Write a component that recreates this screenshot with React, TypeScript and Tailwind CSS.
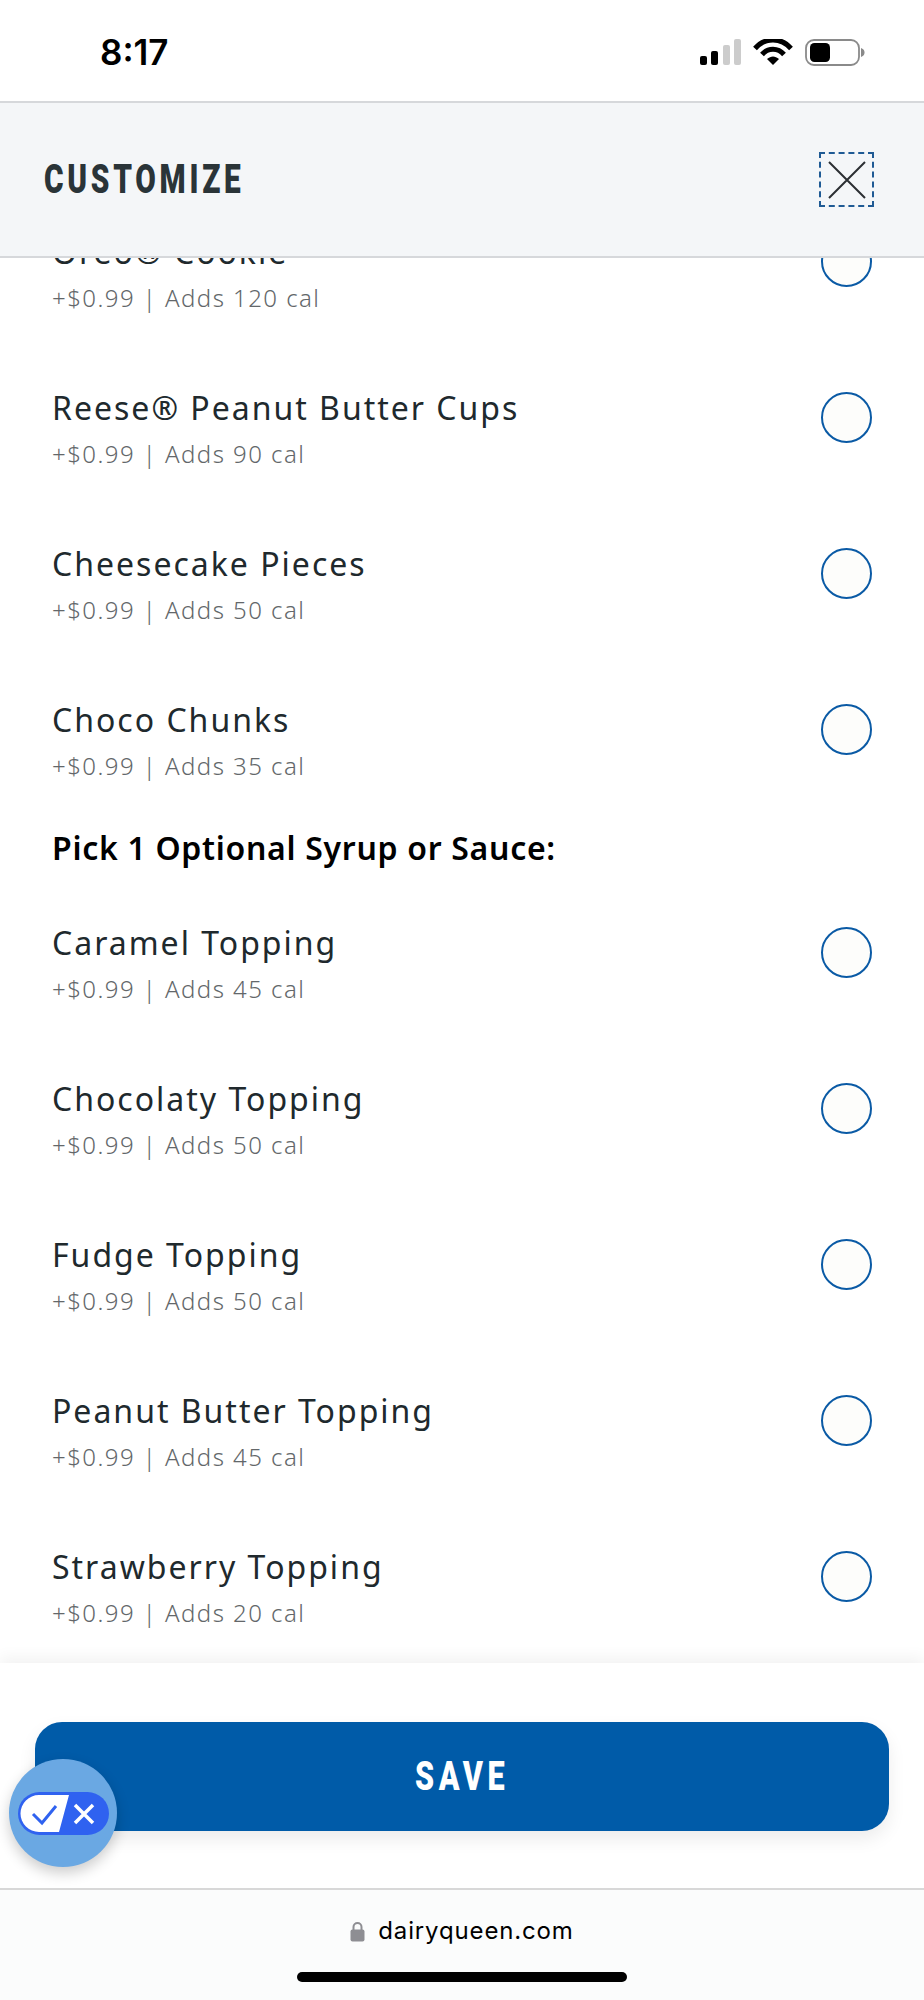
const topRows = [
  { name: 'Oreo® Cookie', info: '+$0.99 | Adds 120 cal' },
  { name: 'Reese® Peanut Butter Cups', info: '+$0.99 | Adds 90 cal' },
  { name: 'Cheesecake Pieces', info: '+$0.99 | Adds 50 cal' },
  { name: 'Choco Chunks', info: '+$0.99 | Adds 35 cal' },
];

const syrupRows = [
  { name: 'Caramel Topping', info: '+$0.99 | Adds 45 cal' },
  { name: 'Chocolaty Topping', info: '+$0.99 | Adds 50 cal' },
  { name: 'Fudge Topping', info: '+$0.99 | Adds 50 cal' },
  { name: 'Peanut Butter Topping', info: '+$0.99 | Adds 45 cal' },
  { name: 'Strawberry Topping', info: '+$0.99 | Adds 20 cal' },
];

function OptionRow({ name, info }: { name: string; info: string }) {
  return (
    <div className="flex items-start justify-between pl-[52px] pr-[52px] h-[78px]">
      <div className="flex flex-col">
        <span className="text-[32px] leading-[36px] tracking-[2px] text-[#20292d]">{name}</span>
        <span className="mt-[14px] text-[24px] leading-[28px] tracking-[1.45px] font-light text-[#63676a]">{info}</span>
      </div>
      <div className="mt-[2px] w-[51px] h-[51px] rounded-full border-2 border-[#0a5aa5] bg-[#fdfdfb]" />
    </div>
  );
}

function StatusIcons() {
  return (
    <svg width="170" height="32" viewBox="0 0 170 32" className="block">
      <rect x="1" y="17" width="7" height="9" rx="2" fill="#000" />
      <rect x="12" y="12" width="7" height="14" rx="2" fill="#000" />
      <rect x="24" y="6" width="7" height="20" rx="2" fill="#cccccc" />
      <rect x="35" y="0" width="7" height="26" rx="2" fill="#cccccc" />
      <path d="M56 9.5 C66 -2 82 -2 92 9.5" fill="none" stroke="#000" strokeWidth="5" />
      <path d="M63 15.5 C69 8.5 79 8.5 85 15.5" fill="none" stroke="#000" strokeWidth="5" />
      <path d="M68 20 C72 16.5 76 16.5 80 20 L74 26 Z" fill="#000" />
      <rect x="107" y="1" width="53" height="25" rx="8" fill="none" stroke="#8a8a8a" strokeWidth="1.8" />
      <rect x="111" y="4" width="20" height="19" rx="4.5" fill="#000" />
      <path d="M162 9 C165 10 165.5 12 165.5 13.5 C165.5 15 165 17 162 18 Z" fill="#8a8a8a" />
    </svg>
  );
}

function ConsentBadge() {
  return (
    <div className="absolute z-20 left-[9px] top-[1759px] w-[108px] h-[108px] rounded-full bg-[#6aa8e3] shadow-[0_6px_14px_rgba(0,0,0,0.2)] flex items-center justify-center">
      <svg width="91" height="43" viewBox="0 0 91 43" className="block">
        <rect x="0" y="0" width="91" height="43" rx="21.5" fill="#2f62f0" />
        <path d="M21 3 H51 L41 40 H21 A18.5 18.5 0 0 1 21 3 Z" fill="#fff" />
        <path d="M15 22 L24 31 L38 14" fill="none" stroke="#2f62f0" strokeWidth="3" />
        <path d="M57 13 L75 31 M75 13 L57 31" fill="none" stroke="#fff" strokeWidth="3.5" />
      </svg>
    </div>
  );
}

export default function App() {
  return (
    <div className="relative w-[924px] h-[2000px] overflow-hidden bg-white flex flex-col font-['Noto_Sans','Lato',sans-serif]">
      {/* status bar */}
      <div className="h-[101px] shrink-0 flex items-start justify-between pl-[100px] pr-[55px] bg-white">
        <span className="mt-[35px] font-['Inter',sans-serif] text-[35px] leading-none font-semibold text-black">8:17</span>
        <div className="mt-[39px]">
          <StatusIcons />
        </div>
      </div>

      {/* header */}
      <header className="relative z-10 h-[157px] shrink-0 flex items-center justify-between pl-[44px] pr-[50px] bg-[#f4f6f8] border-y-2 border-[#d6d8db]">
        <h1 className="origin-left scale-x-[0.745] font-['Roboto',sans-serif] text-[40px] leading-none font-black tracking-[5px] text-[#2a3438]">CUSTOMIZE</h1>
        <button className="w-[55px] h-[55px] border-2 border-dashed border-[#1f5a94] flex items-center justify-center">
          <svg width="38" height="38" viewBox="0 0 38 38">
            <path d="M1 1 L37 37 M37 1 L1 37" stroke="#2b2f33" strokeWidth="2" fill="none" />
          </svg>
        </button>
      </header>

      {/* options list */}
      <main className="flex-1 overflow-hidden">
        <div className="-mt-[24px] flex flex-col gap-[78px]">
          {topRows.map((row) => (
            <OptionRow key={row.name} name={row.name} info={row.info} />
          ))}
        </div>
        <h2 className="mt-[50px] mb-[59px] pl-[52px] text-[32px] leading-[36px] tracking-[0.7px] font-semibold text-black">Pick 1 Optional Syrup or Sauce:</h2>
        <div className="flex flex-col gap-[78px]">
          {syrupRows.map((row) => (
            <OptionRow key={row.name} name={row.name} info={row.info} />
          ))}
        </div>
      </main>

      {/* save bar */}
      <div className="relative z-10 h-[225px] shrink-0 bg-white shadow-[0_-6px_14px_rgba(0,0,0,0.05)] px-[35px] pt-[59px]">
        <button className="w-full h-[109px] rounded-[27px] bg-[#005ba8] shadow-[0_8px_18px_rgba(0,0,0,0.08)] flex items-center justify-center text-white">
          <span className="scale-x-[0.745] font-['Roboto',sans-serif] text-[41px] leading-none font-black tracking-[6px]">SAVE</span>
        </button>
      </div>

      {/* browser bar */}
      <div className="relative z-10 h-[112px] shrink-0 bg-[#fbfcfc] border-t-2 border-[#d8d8d8] flex flex-col items-center">
        <div className="mt-[26px] flex items-center gap-[13px]">
          <svg width="15" height="21" viewBox="0 0 15 21" className="block">
            <path d="M3.5 9 V6 A4 4 0 0 1 11.5 6 V9" fill="none" stroke="#8e8e93" strokeWidth="2" />
            <rect x="0.5" y="8.5" width="14" height="12" rx="2" fill="#8e8e93" />
          </svg>
          <span className="font-['Inter',sans-serif] text-[24px] leading-[30px] tracking-[0.85px] text-black">dairyqueen.com</span>
        </div>
        <div className="mt-[26px] w-[330px] h-[10px] rounded-full bg-black" />
      </div>

      <ConsentBadge />
    </div>
  );
}
